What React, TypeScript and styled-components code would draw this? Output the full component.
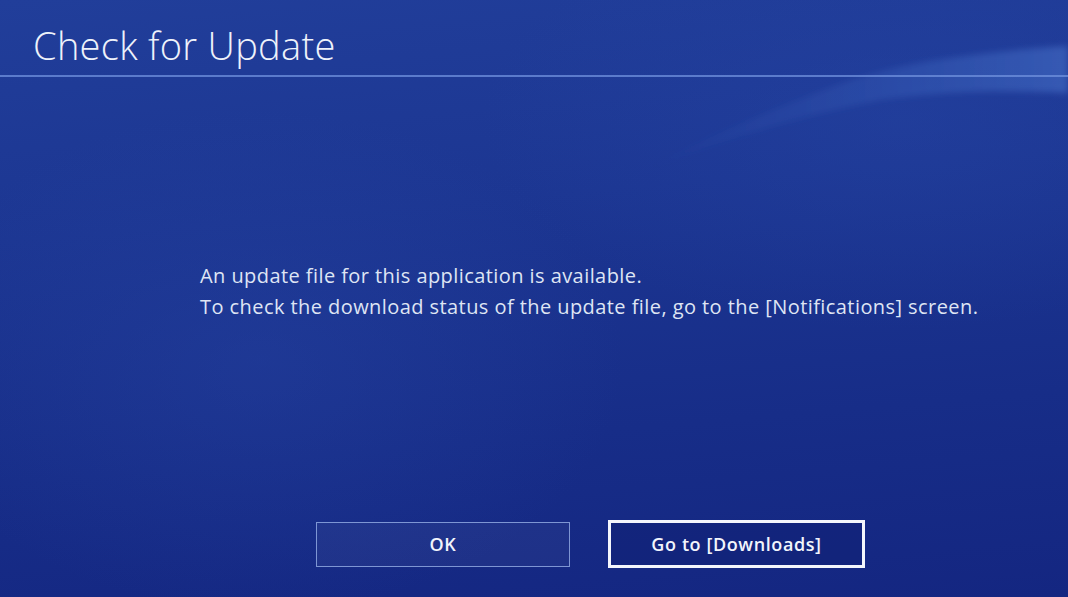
import styled, { createGlobalStyle } from 'styled-components';

const GlobalStyle = createGlobalStyle`
	html, body {
		margin: 0;
		padding: 0;
		background: #1a338f;
	}
	* {
		box-sizing: border-box;
	}
`;

const Screen = styled.div`
	position: relative;
	width: 100%;
	height: 100vh;
	overflow: hidden;
	display: flex;
	flex-direction: column;
	font-family: 'Open Sans', 'Noto Sans', sans-serif;
	color: #e6ebf7;
	background:
		radial-gradient(ellipse 520px 360px at 260px 360px, rgba(40, 70, 165, 0.35), transparent 70%),
		radial-gradient(ellipse 600px 300px at 900px 120px, rgba(40, 72, 168, 0.35), transparent 70%),
		linear-gradient(175deg, #213e9a 0%, #1c3692 35%, #172d88 70%, #142681 100%);
`;

// 右上の薄い光の帯（背景の装飾）
const Wave = styled.svg`
	position: absolute;
	inset: 0;
	width: 100%;
	height: 100%;
	pointer-events: none;
`;

const Header = styled.header`
	position: relative;
	height: 77px;
	padding: 26px 0 0 33px;
	border-bottom: 2px solid rgba(112, 146, 222, 0.75);
`;

const Title = styled.h1`
	margin: 0;
	font-size: 38px;
	line-height: 38px;
	font-weight: 300;
	color: #eef2fb;
	letter-spacing: 0.3px;
`;

const Message = styled.div`
	position: relative;
	margin: 183px 0 0 200px;
	font-size: 20px;
	line-height: 31px;
	font-weight: 400;
	letter-spacing: 0.43px;
	color: #dfe5f4;
`;

const Line = styled.p`
	margin: 0;
	white-space: nowrap;
`;

const ButtonRow = styled.div`
	position: relative;
	display: flex;
	align-items: center;
	gap: 38px;
	height: 48px;
	margin: 198px 0 0 316px;
`;

const Button = styled.button<{ $focused?: boolean }>`
	display: flex;
	align-items: center;
	justify-content: center;
	width: ${(p) => (p.$focused ? 257 : 254)}px;
	height: ${(p) => (p.$focused ? 48 : 45)}px;
	padding: 0;
	font-family: 'Open Sans', 'Noto Sans', sans-serif;
	font-size: 18px;
	font-weight: 600;
	letter-spacing: 0.6px;
	color: #f2f5fc;
	background: ${(p) => (p.$focused ? 'rgba(10, 25, 100, 0.25)' : 'rgba(255, 255, 255, 0.04)')};
	border: ${(p) => (p.$focused ? '3px solid #f4f6fc' : '1px solid rgba(150, 175, 230, 0.8)')};
	cursor: pointer;
`;

export default function App() {
	return (
		<>
			<GlobalStyle />
			<Screen>
				<Wave viewBox="0 0 1068 597" preserveAspectRatio="none">
					<defs>
						<linearGradient id="band" x1="640" y1="0" x2="1068" y2="0" gradientUnits="userSpaceOnUse">
							<stop offset="0" stopColor="#4a78d0" stopOpacity="0" />
							<stop offset="0.45" stopColor="#4a78d0" stopOpacity="0.16" />
							<stop offset="1" stopColor="#5a8ae0" stopOpacity="0.38" />
						</linearGradient>
						<filter id="soft">
							<feGaussianBlur stdDeviation="3" />
						</filter>
					</defs>
					<path
						d="M1068 46 C 980 52, 900 62, 840 84 C 770 110, 700 140, 640 172 C 720 140, 800 116, 880 100 C 950 90, 1010 90, 1068 93 Z"
						fill="url(#band)"
						filter="url(#soft)"
					/>
				</Wave>
				<Header>
					<Title>Check for Update</Title>
				</Header>
				<Message>
					<Line>An update file for this application is available.</Line>
					<Line>To check the download status of the update file, go to the [Notifications] screen.</Line>
				</Message>
				<ButtonRow>
					<Button>OK</Button>
					<Button $focused>Go to [Downloads]</Button>
				</ButtonRow>
			</Screen>
		</>
	);
}
